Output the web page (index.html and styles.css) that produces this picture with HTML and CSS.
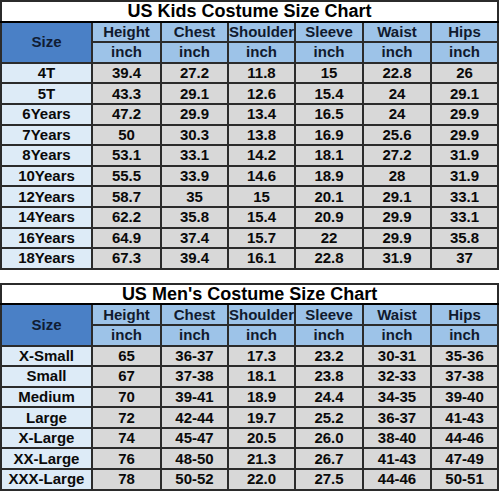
FILE: index.html
```html
<!DOCTYPE html>
<html lang="en">
<head>
  <meta charset="UTF-8" />
  <title>Costume Size Chart</title>
  <link rel="stylesheet" href="styles.css">
</head>
<body>

  <!-- KIDS -->
  <table class="chart">
    <colgroup>
      <col class="col-size"><col class="col-height"><col class="col-num"><col class="col-num">
      <col class="col-wide"><col class="col-wide"><col class="col-num">
    </colgroup>
    <tr class="title-row"><th colspan="7">US Kids Costume Size Chart</th></tr>
    <tr class="head-row">
      <th rowspan="2" class="size-head">Size</th>
      <th>Height</th><th>Chest</th><th>Shoulder</th><th>Sleeve</th><th>Waist</th><th>Hips</th>
    </tr>
    <tr class="head-row">
      <th>inch</th><th>inch</th><th>inch</th><th>inch</th><th>inch</th><th>inch</th>
    </tr>
    <tr><th class="size">4T</th><td>39.4</td><td>27.2</td><td>11.8</td><td>15</td><td>22.8</td><td>26</td></tr>
    <tr><th class="size">5T</th><td>43.3</td><td>29.1</td><td>12.6</td><td>15.4</td><td>24</td><td>29.1</td></tr>
    <tr><th class="size">6Years</th><td>47.2</td><td>29.9</td><td>13.4</td><td>16.5</td><td>24</td><td>29.9</td></tr>
    <tr><th class="size">7Years</th><td>50</td><td>30.3</td><td>13.8</td><td>16.9</td><td>25.6</td><td>29.9</td></tr>
    <tr><th class="size">8Years</th><td>53.1</td><td>33.1</td><td>14.2</td><td>18.1</td><td>27.2</td><td>31.9</td></tr>
    <tr><th class="size">10Years</th><td>55.5</td><td>33.9</td><td>14.6</td><td>18.9</td><td>28</td><td>31.9</td></tr>
    <tr><th class="size">12Years</th><td>58.7</td><td>35</td><td>15</td><td>20.1</td><td>29.1</td><td>33.1</td></tr>
    <tr><th class="size">14Years</th><td>62.2</td><td>35.8</td><td>15.4</td><td>20.9</td><td>29.9</td><td>33.1</td></tr>
    <tr><th class="size">16Years</th><td>64.9</td><td>37.4</td><td>15.7</td><td>22</td><td>29.9</td><td>35.8</td></tr>
    <tr><th class="size">18Years</th><td>67.3</td><td>39.4</td><td>16.1</td><td>22.8</td><td>31.9</td><td>37</td></tr>
  </table>

  <!-- MEN -->
  <table class="chart chart-men">
    <colgroup>
      <col class="col-size"><col class="col-height"><col class="col-num"><col class="col-num">
      <col class="col-wide"><col class="col-wide"><col class="col-num">
    </colgroup>
    <tr class="title-row"><th colspan="7">US Men's Costume Size Chart</th></tr>
    <tr class="head-row">
      <th rowspan="2" class="size-head">Size</th>
      <th>Height</th><th>Chest</th><th>Shoulder</th><th>Sleeve</th><th>Waist</th><th>Hips</th>
    </tr>
    <tr class="head-row">
      <th>inch</th><th>inch</th><th>inch</th><th>inch</th><th>inch</th><th>inch</th>
    </tr>
    <tr><th class="size">X-Small</th><td>65</td><td>36-37</td><td>17.3</td><td>23.2</td><td>30-31</td><td>35-36</td></tr>
    <tr><th class="size">Small</th><td>67</td><td>37-38</td><td>18.1</td><td>23.8</td><td>32-33</td><td>37-38</td></tr>
    <tr><th class="size">Medium</th><td>70</td><td>39-41</td><td>18.9</td><td>24.4</td><td>34-35</td><td>39-40</td></tr>
    <tr><th class="size">Large</th><td>72</td><td>42-44</td><td>19.7</td><td>25.2</td><td>36-37</td><td>41-43</td></tr>
    <tr><th class="size">X-Large</th><td>74</td><td>45-47</td><td>20.5</td><td>26.0</td><td>38-40</td><td>44-46</td></tr>
    <tr><th class="size">XX-Large</th><td>76</td><td>48-50</td><td>21.3</td><td>26.7</td><td>41-43</td><td>47-49</td></tr>
    <tr><th class="size">XXX-Large</th><td>78</td><td>50-52</td><td>22.0</td><td>27.5</td><td>44-46</td><td>50-51</td></tr>
  </table>

</body>
</html>
```

FILE: styles.css
```css
body {
  margin: 0;
  background: #fff;
  font-family: "Liberation Sans", Arial, sans-serif;
  color: #000;
}

.chart {
  width: 499px;
  border-collapse: collapse;
  table-layout: fixed;
  border: 2px solid #000;
}

.chart-men {
  margin-top: 13px;
}

.col-size { width: 91px; }
.col-height { width: 69px; }
.col-num { width: 67px; }
.col-wide { width: 68px; }

.chart th,
.chart td {
  border: 2px solid #2b2b2b;
  padding: 0;
  text-align: center;
  vertical-align: middle;
  font-size: 15px;
  font-weight: bold;
  line-height: 16px;
  white-space: nowrap;
  overflow: hidden;
}

.chart tr {
  height: 20.6px;
}

.title-row th {
  background: #fff;
  color: #000;
  font-size: 18px;
  line-height: 18px;
  border-bottom-color: #000;
}

.title-row {
  height: 21px;
}

.head-row th {
  background: #9dc3e8;
  color: #101a2e;
}

.head-row th.size-head {
  background: #4a80c6;
  color: #101c33;
}

.chart th.size {
  background: #ddebf7;
  color: #0a0a0a;
}

.chart td {
  background: #d8d8d8;
  color: #0a0a0a;
}
```
